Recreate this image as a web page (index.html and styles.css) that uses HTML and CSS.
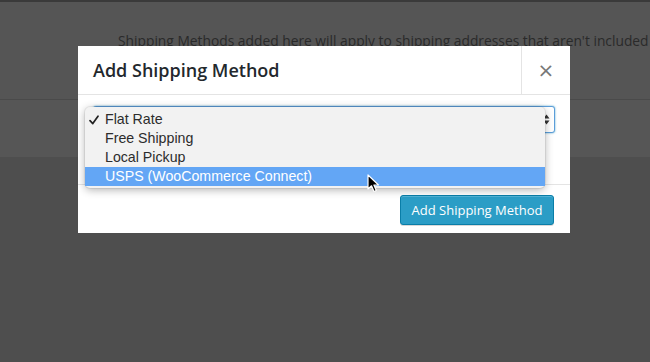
FILE: index.html
```html
<!DOCTYPE html>
<html lang="en">
<head>
    <meta charset="UTF-8">
    <meta name="viewport" content="width=device-width, initial-scale=1.0">
    <title>Add Shipping Method</title>
    <link rel="stylesheet" href="styles.css">
</head>
<body>
    <div class="page">
        <div class="topbar"></div>
        <div class="notice">
            <p>Shipping Methods added here will apply to shipping addresses that aren't included</p>
        </div>
        <div class="band"></div>
        <div class="rest"></div>
    </div>

    <div class="modal">
        <div class="modal-header">
            <h1>Add Shipping Method</h1>
            <button class="close">&times;</button>
        </div>
        <div class="modal-body">
            <div class="select">
                <span class="arrows">
                    <svg width="7" height="11" viewBox="0 0 7 11"><path d="M3.5 0.5 L6.5 4.5 H0.5 Z M3.5 10.5 L6.5 6.5 H0.5 Z" fill="#333"/></svg>
                </span>
            </div>
            <!-- open native popup menu -->
            <ul class="menu">
                <li class="checked">
                    <svg class="check" width="10" height="10" viewBox="0 0 10 10"><path d="M1 5.6 L3.8 8.6 L9 1.2" fill="none" stroke="#222" stroke-width="1.7" stroke-linecap="round" stroke-linejoin="round"/></svg>
                    Flat Rate
                </li>
                <li>Free Shipping</li>
                <li>Local Pickup</li>
                <li class="active">USPS (WooCommerce Connect)</li>
            </ul>
        </div>
        <div class="modal-footer">
            <button class="button-primary">Add Shipping Method</button>
        </div>
    </div>

    <svg class="cursor" width="13" height="19" viewBox="0 0 13 19">
        <path d="M1 1 L1 15 L4.5 11.8 L7 17.5 L9.3 16.5 L6.9 11 L11.5 11 Z" fill="#000" stroke="#fff" stroke-width="1.2" stroke-linejoin="round"/>
    </svg>
</body>
</html>
```

FILE: styles.css
```css
html, body {
    margin: 0;
    padding: 0;
    height: 100%;
    font-family: "Open Sans", sans-serif;
    background-color: #4e4e4e;
    overflow: hidden;
}
.page {
    display: flex;
    flex-direction: column;
    height: 100%;
}
.topbar {
    height: 2px;
    background-color: #3a3a3a;
}
.notice {
    height: 98px;
    background-color: #555;
    border-bottom: 1px solid #4a4a4a;
    box-sizing: border-box;
}
.notice p {
    margin: 0;
    padding: 29px 0 0 118px;
    font-size: 13.8px;
    color: #2a2a2a;
    white-space: nowrap;
}
.band {
    height: 57px;
    background-color: #565656;
}
.rest {
    flex-grow: 1;
    background-color: #4e4e4e;
}
.modal {
    position: absolute;
    left: 78px;
    top: 46px;
    width: 492px;
    height: 187px;
    background-color: #fff;
    display: flex;
    flex-direction: column;
}
.modal-header {
    display: flex;
    height: 48px;
    border-bottom: 1px solid #e4e4e4;
}
.modal-header h1 {
    flex: 1;
    margin: 0;
    padding-left: 15px;
    font-size: 18px;
    font-weight: 600;
    line-height: 48px;
    color: #23282d;
}
.close {
    width: 49px;
    border: none;
    border-left: 1px solid #e4e4e4;
    background: none;
    font-family: "DejaVu Sans", sans-serif;
    font-size: 20px;
    color: #777;
    padding: 0;
}
.modal-body {
    position: relative;
    height: 89px;
    padding: 11px 15px 0 15px;
    box-sizing: border-box;
}
.select {
    height: 27px;
    border: 1px solid #5b9dd9;
    border-radius: 3px;
    box-shadow: 0 0 2px rgba(30, 140, 190, 0.8);
    background-color: #fff;
    box-sizing: border-box;
    display: flex;
    justify-content: flex-end;
    align-items: center;
    padding-right: 4px;
}
.arrows svg {
    display: block;
}
.menu {
    position: absolute;
    left: 7px;
    top: 12px;
    width: 460px;
    margin: 0;
    padding: 3px 0 2px 0;
    list-style: none;
    background-color: #f2f2f2;
    border-radius: 5px;
    box-shadow: 0 2px 8px rgba(0, 0, 0, 0.3), 0 0 0 1px rgba(0, 0, 0, 0.06);
    font-family: "Liberation Sans", Arial, sans-serif;
    font-size: 14.2px;
    color: #2c2c2c;
}
.menu li {
    position: relative;
    height: 19px;
    line-height: 19px;
    padding-left: 20px;
}
.menu .check {
    position: absolute;
    left: 4px;
    top: 5px;
}
.menu li.active {
    background-color: #63a6f5;
    color: #fff;
}
.modal-footer {
    flex: 1;
    border-top: 1px solid #e4e4e4;
    display: flex;
    justify-content: flex-end;
    align-items: flex-start;
    padding: 10px 16px 0 0;
}
.button-primary {
    width: 154px;
    height: 30px;
    background-color: #2b9dc6;
    border: 1px solid #0a7ea8;
    border-radius: 3px;
    box-shadow: inset 0 1px 0 rgba(120, 200, 230, 0.5), 0 1px 0 rgba(0, 0, 0, 0.15);
    color: #fff;
    font-family: "Open Sans", sans-serif;
    font-size: 13px;
    padding: 0;
}
.cursor {
    position: absolute;
    left: 367px;
    top: 174px;
}
```
